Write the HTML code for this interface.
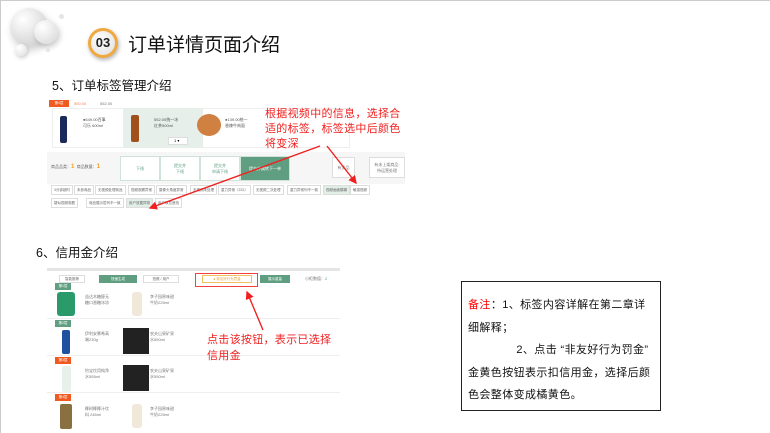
<!DOCTYPE html>
<html><head><meta charset="utf-8"><style>
*{margin:0;padding:0;box-sizing:border-box}
body{width:770px;height:433px;overflow:hidden;background:#fff;font-family:"Liberation Sans","Noto Sans CJK SC",sans-serif;position:relative}
.a{position:absolute}
.t{font-size:4px;color:#777;white-space:nowrap}
.tag{position:absolute;height:10px;border:1px solid #ddd;font-size:3.5px;color:#666;line-height:8px;padding:0 2px;white-space:nowrap}
.g{background:#5f9e80;color:#fff}
.bt{position:absolute;border:1px solid #cfe3d8;font-size:4px;color:#5f9e80;text-align:center;display:flex;align-items:center;justify-content:center}
.lay{position:absolute;left:5px;width:16px;height:7px;font-size:3.5px;color:#fff;text-align:center;line-height:7px}
.red{color:#f02020;font-size:11px;line-height:15px;letter-spacing:.3px}
</style></head><body>
<div class="a" style="left:0;top:0;width:770px;height:433px;border:1px solid #ccc;border-right:none;border-bottom:none"></div>
<div class="a" style="left:10px;top:8px;width:38px;height:38px;border-radius:50%;background:radial-gradient(circle at 35% 30%,#fff,#d8d8d8 70%,#c8c8c8);box-shadow:2px 4px 8px rgba(0,0,0,.2)"></div>
<div class="a" style="left:34px;top:20px;width:24px;height:24px;border-radius:50%;background:radial-gradient(circle at 35% 30%,#fff,#d5d5d5);box-shadow:2px 3px 6px rgba(0,0,0,.2)"></div>
<div class="a" style="left:15px;top:44px;width:12px;height:12px;border-radius:50%;background:radial-gradient(circle at 35% 30%,#fff,#ddd);box-shadow:1px 2px 4px rgba(0,0,0,.2)"></div>
<div class="a" style="left:59px;top:14px;width:5px;height:5px;border-radius:50%;background:#e5e5e5"></div>
<div class="a" style="left:46px;top:48px;width:4px;height:4px;border-radius:50%;background:#e5e5e5"></div>
<div class="a" style="left:88px;top:28px;width:30px;height:30px;border-radius:50%;background:#f0a840;box-shadow:1px 2px 4px rgba(0,0,0,.3)"></div>
<div class="a" style="left:91px;top:31px;width:24px;height:24px;border-radius:50%;background:radial-gradient(circle at 40% 35%,#fff,#ddd);font-weight:bold;font-size:13px;line-height:24px;text-align:center;color:#222">03</div>
<div class="a" style="left:128px;top:30px;font-size:19px;color:#111">订单详情页面介绍</div>
<div class="a" style="left:52px;top:75px;font-size:12.5px;color:#111">5、订单标签管理介绍</div>
<div class="a" style="left:36px;top:242px;font-size:12.5px;color:#111">6、信用金介绍</div>

<div class="a" style="left:47px;top:100px;width:358px;height:112px;background:#fff;overflow:hidden">
 <div class="lay" style="left:2px;top:0;width:20px;background:#f05a20">第4层</div>
 <div class="t" style="left:27px;top:1px;position:absolute;color:#f08060">550.00</div>
 <div class="t" style="left:53px;top:1px;position:absolute">552.00</div>
 <div class="a" style="left:5px;top:8px;width:298px;height:40px;border:1px solid #eee"></div>
 <div class="a" style="left:13px;top:16px;width:7px;height:27px;background:#1a2a5a;border-radius:2px"></div>
 <div class="t a" style="left:36px;top:17px;color:#555">●649.00百事<br>可乐 600ml</div>
 <div class="a" style="left:76px;top:8px;width:80px;height:40px;background:#e6efe9"></div>
 <div class="a" style="left:84px;top:15px;width:8px;height:27px;background:#a0501a;border-radius:2px"></div>
 <div class="t a" style="left:107px;top:17px;color:#555">552.00统一冰<br>红茶500ml</div>
 <div class="a" style="left:121px;top:37px;width:20px;height:8px;background:#fff;border:1px solid #ddd;font-size:4px;line-height:6px;padding-left:5px">1 ▾</div>
 <div class="a" style="left:150px;top:14px;width:24px;height:22px;border-radius:50%;background:#d08040"></div>
 <div class="t a" style="left:178px;top:17px;color:#555">●139.00统一<br>香辣牛肉面</div>
 <div class="a" style="left:0;top:52px;width:358px;height:32px;background:#f6f6f6"></div>
 <div class="t a" style="left:4px;top:64px;color:#666">商品品类：<b style="color:#f0a020;font-size:6px">1</b>&nbsp; 商品数量：<b style="color:#f0a020;font-size:6px">1</b></div>
 <div class="bt" style="left:73px;top:56px;width:40px;height:25px;background:#fff">下线</div>
 <div class="bt" style="left:113px;top:56px;width:40px;height:25px;background:#fff">提交并<br>下线</div>
 <div class="bt" style="left:153px;top:56px;width:40px;height:25px;background:#fff">提交并<br>申请下线</div>
 <div class="bt g" style="left:193px;top:56px;width:50px;height:25px;color:#fff">提交并跳转下一单</div>
 <div class="bt" style="left:285px;top:57px;width:23px;height:21px;background:#fff;color:#777;border-color:#ddd">有货品</div>
 <div class="bt" style="left:322px;top:57px;width:36px;height:21px;background:#fff;color:#777;border-color:#ddd">有未上架商品·<br>待运营处理</div>
 <div class="tag" style="left:4px;top:85px">3分钟超时</div>
 <div class="tag" style="left:27px;top:85px">未参商品</div>
 <div class="tag" style="left:48px;top:85px">无视频处理商品</div>
 <div class="tag" style="left:81px;top:85px">视频观察异常</div>
 <div class="tag" style="left:109px;top:85px">摄像头角度异常</div>
 <div class="tag" style="left:143px;top:85px">无视频未处理</div>
 <div class="tag" style="left:171px;top:85px">重力异常（231）</div>
 <div class="tag" style="left:206px;top:85px">无视频二次处理</div>
 <div class="tag" style="left:240px;top:85px">重力异常列不一致</div>
 <div class="tag" style="left:276px;top:85px;background:#e2efe7">视频画面模糊</div>
 <div class="tag" style="left:303px;top:85px">敏感视频</div>
 <div class="tag" style="left:4px;top:98px">疑似视频观看</div>
 <div class="tag" style="left:39px;top:98px">商品展示层列不一致</div>
 <div class="tag" style="left:79px;top:98px;background:#e2efe7">用户放置异物</div>
 <div class="tag" style="left:108px;top:98px">用户故意遮挡</div>
</div>
<div class="a red" style="left:265px;top:107px;width:145px">根据视频中的信息，选择合适的标签，标签选中后颜色将变深</div>

<div class="a" style="left:47px;top:268px;width:293px;height:165px;background:#fff;overflow:hidden">
 <div class="a" style="left:0;top:0;width:293px;height:3px;background:#e5e5e5"></div>
 <div class="tag" style="left:12px;top:7px;width:26px;height:8px;text-align:center;line-height:6px">智能推荐</div>
 <div class="tag g" style="left:52px;top:7px;width:38px;height:8px;text-align:center;line-height:6px;border-color:#5f9e80">快速生成</div>
 <div class="tag" style="left:96px;top:7px;width:36px;height:8px;text-align:center;line-height:6px">拍照 / 用户</div>
 <div class="a" style="left:148px;top:5px;width:63px;height:14px;border:1px solid #f04040"></div>
 <div class="a" style="left:155px;top:7px;width:50px;height:8px;border:1px solid #f0c060;font-size:3.5px;color:#e0a030;line-height:6px;text-align:center">● 非友好行为罚金</div>
 <div class="tag g" style="left:213px;top:7px;width:30px;height:8px;text-align:center;line-height:6px;border-color:#5f9e80">展示重量</div>
 <div class="t a" style="left:258px;top:8px">小柜数值：<span style="color:#5f9e80">2</span></div>
 <div class="lay" style="left:8px;top:15px;background:#5f9e80">第1层</div>
 <div class="a" style="left:10px;top:24px;width:18px;height:24px;background:#2a9a6a;border-radius:3px"></div>
 <div class="t a" style="left:38px;top:26px">益达木糖醇无<br>糖口香糖冰凉</div>
 <div class="a" style="left:85px;top:24px;width:10px;height:24px;background:#f0e8d8;border-radius:3px"></div>
 <div class="t a" style="left:103px;top:26px">李子园原味甜<br>牛奶225ml</div>
 <div class="a" style="left:0;top:50px;width:293px;height:1px;background:#eee"></div>
 <div class="lay" style="left:8px;top:52px;background:#5f9e80">第2层</div>
 <div class="a" style="left:15px;top:62px;width:8px;height:24px;background:#2050a0;border-radius:2px"></div>
 <div class="t a" style="left:38px;top:63px">伊利安慕希高<br>端230g</div>
 <div class="a" style="left:76px;top:60px;width:26px;height:26px;background:#222"></div>
 <div class="t a" style="left:103px;top:63px">农夫山泉矿泉<br>水550ml</div>
 <div class="a" style="left:0;top:87px;width:293px;height:1px;background:#eee"></div>
 <div class="lay" style="left:8px;top:89px;background:#f05a20">第3层</div>
 <div class="a" style="left:15px;top:98px;width:9px;height:26px;background:#e8f0ea;border-radius:2px"></div>
 <div class="t a" style="left:38px;top:100px">怡宝饮用纯净<br>水555ml</div>
 <div class="a" style="left:76px;top:97px;width:26px;height:26px;background:#222"></div>
 <div class="t a" style="left:103px;top:100px">农夫山泉矿泉<br>水550ml</div>
 <div class="a" style="left:0;top:124px;width:293px;height:1px;background:#eee"></div>
 <div class="lay" style="left:8px;top:126px;background:#f05a20">第4层</div>
 <div class="a" style="left:13px;top:136px;width:12px;height:25px;background:#8a7040;border-radius:2px"></div>
 <div class="t a" style="left:38px;top:138px">椰树椰椰汁饮<br>料 245ml</div>
 <div class="a" style="left:85px;top:136px;width:10px;height:24px;background:#f0e8d8;border-radius:3px"></div>
 <div class="t a" style="left:103px;top:138px">李子园原味甜<br>牛奶225ml</div>
</div>
<div class="a red" style="left:207px;top:332px;width:125px;line-height:16px">点击该按钮，表示已选择信用金</div>

<svg class="a" style="left:0;top:0" width="770" height="433">
 <defs><marker id="m" markerWidth="6" markerHeight="6" refX="5" refY="3" orient="auto"><path d="M0,0 L6,3 L0,6 z" fill="#f02020"/></marker></defs>
 <g stroke="#f02020" stroke-width="1.4" fill="none" marker-end="url(#m)">
  <line x1="320" y1="146" x2="150" y2="208"/>
  <line x1="327" y1="146" x2="356" y2="183"/>
  <line x1="263" y1="330" x2="247" y2="292"/>
 </g>
</svg>

<div class="a" style="left:461px;top:281px;width:200px;height:130px;border:1px solid #222;padding:12px 4px 0 6px;font-size:11px;line-height:22.5px;color:#111;letter-spacing:.4px">
<span style="color:#f00">备注</span>：1、标签内容详解在第二章详细解释；<br>
&nbsp;&nbsp;&nbsp;&nbsp;&nbsp;&nbsp;&nbsp;&nbsp;&nbsp;&nbsp;&nbsp;&nbsp;&nbsp;&nbsp;2、点击 “非友好行为罚金” 金黄色按钮表示扣信用金，选择后颜色会整体变成橘黄色。
</div>
</body></html>
